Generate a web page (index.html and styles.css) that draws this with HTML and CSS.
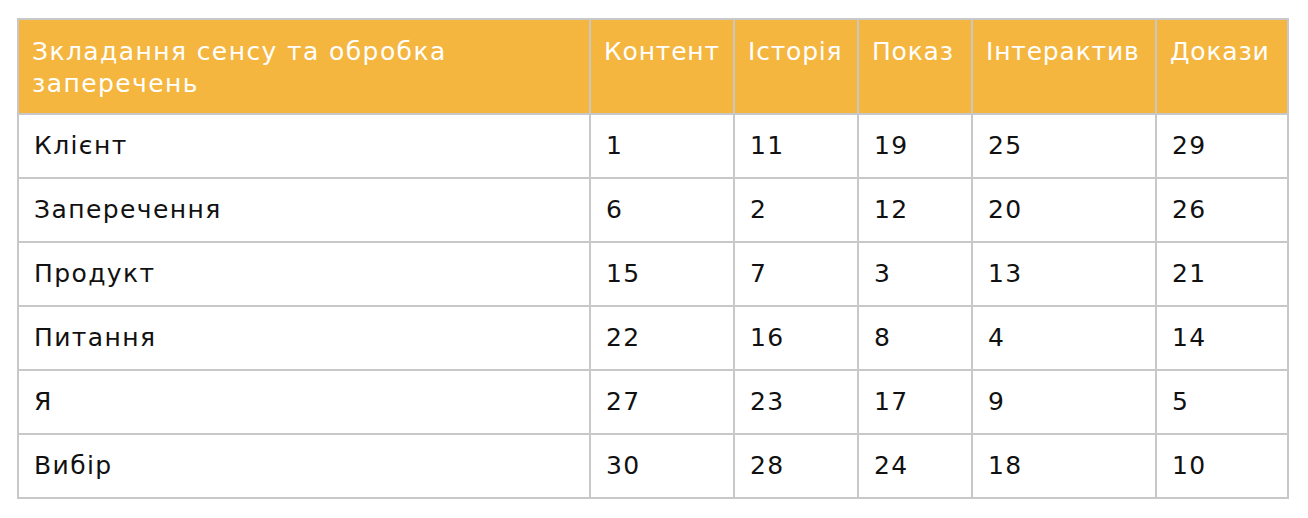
FILE: index.html
```html
<!DOCTYPE html>
<html lang="uk">
<head>
<meta charset="utf-8">
<link rel="stylesheet" href="styles.css">
</head>
<body>
<table class="grid">
  <colgroup>
    <col class="c1"><col class="c2"><col class="c3"><col class="c4"><col class="c5"><col class="c6">
  </colgroup>
  <thead>
    <tr>
      <th>Зкладання сенсу та обробка заперечень</th>
      <th class="narrow">Контент</th>
      <th class="narrow">Історія</th>
      <th class="narrow">Показ</th>
      <th class="narrow">Інтерактив</th>
      <th class="narrow">Докази</th>
    </tr>
  </thead>
  <tbody>
    <tr><td>Клієнт</td><td>1</td><td>11</td><td>19</td><td>25</td><td>29</td></tr>
    <tr><td>Заперечення</td><td>6</td><td>2</td><td>12</td><td>20</td><td>26</td></tr>
    <tr><td>Продукт</td><td>15</td><td>7</td><td>3</td><td>13</td><td>21</td></tr>
    <tr><td>Питання</td><td>22</td><td>16</td><td>8</td><td>4</td><td>14</td></tr>
    <tr><td>Я</td><td>27</td><td>23</td><td>17</td><td>9</td><td>5</td></tr>
    <tr><td>Вибір</td><td>30</td><td>28</td><td>24</td><td>18</td><td>10</td></tr>
  </tbody>
</table>
</body>
</html>
```
FILE: styles.css
```css
html, body {
  margin: 0;
  padding: 0;
  background: #ffffff;
}
body {
  padding: 18px 0 0 17px;
  font-family: "DejaVu Sans", "Noto Sans", sans-serif;
}
.grid {
  border-collapse: collapse;
  table-layout: fixed;
  width: 1272px;
}
.c1 { width: 572px; }
.c2 { width: 144px; }
.c3 { width: 124px; }
.c4 { width: 114px; }
.c5 { width: 184px; }
.c6 { width: 132px; }
.grid th, .grid td {
  border: 2px solid #c8c8c8;
  text-align: left;
  font-weight: 400;
}
.grid th {
  background: #f5b63f;
  color: #ffffff;
  font-size: 25px;
  line-height: 32px;
  letter-spacing: 1.4px;
  padding: 16px 12px 12px 13px;
  height: 65px;
  vertical-align: top;
}
.grid th.narrow {
  letter-spacing: 0.8px;
  white-space: nowrap;
}
.grid td {
  color: #111111;
  font-size: 25px;
  line-height: 32px;
  letter-spacing: 1.4px;
  height: 62px;
  padding: 0 14px 0 15px;
  vertical-align: middle;
}
```
